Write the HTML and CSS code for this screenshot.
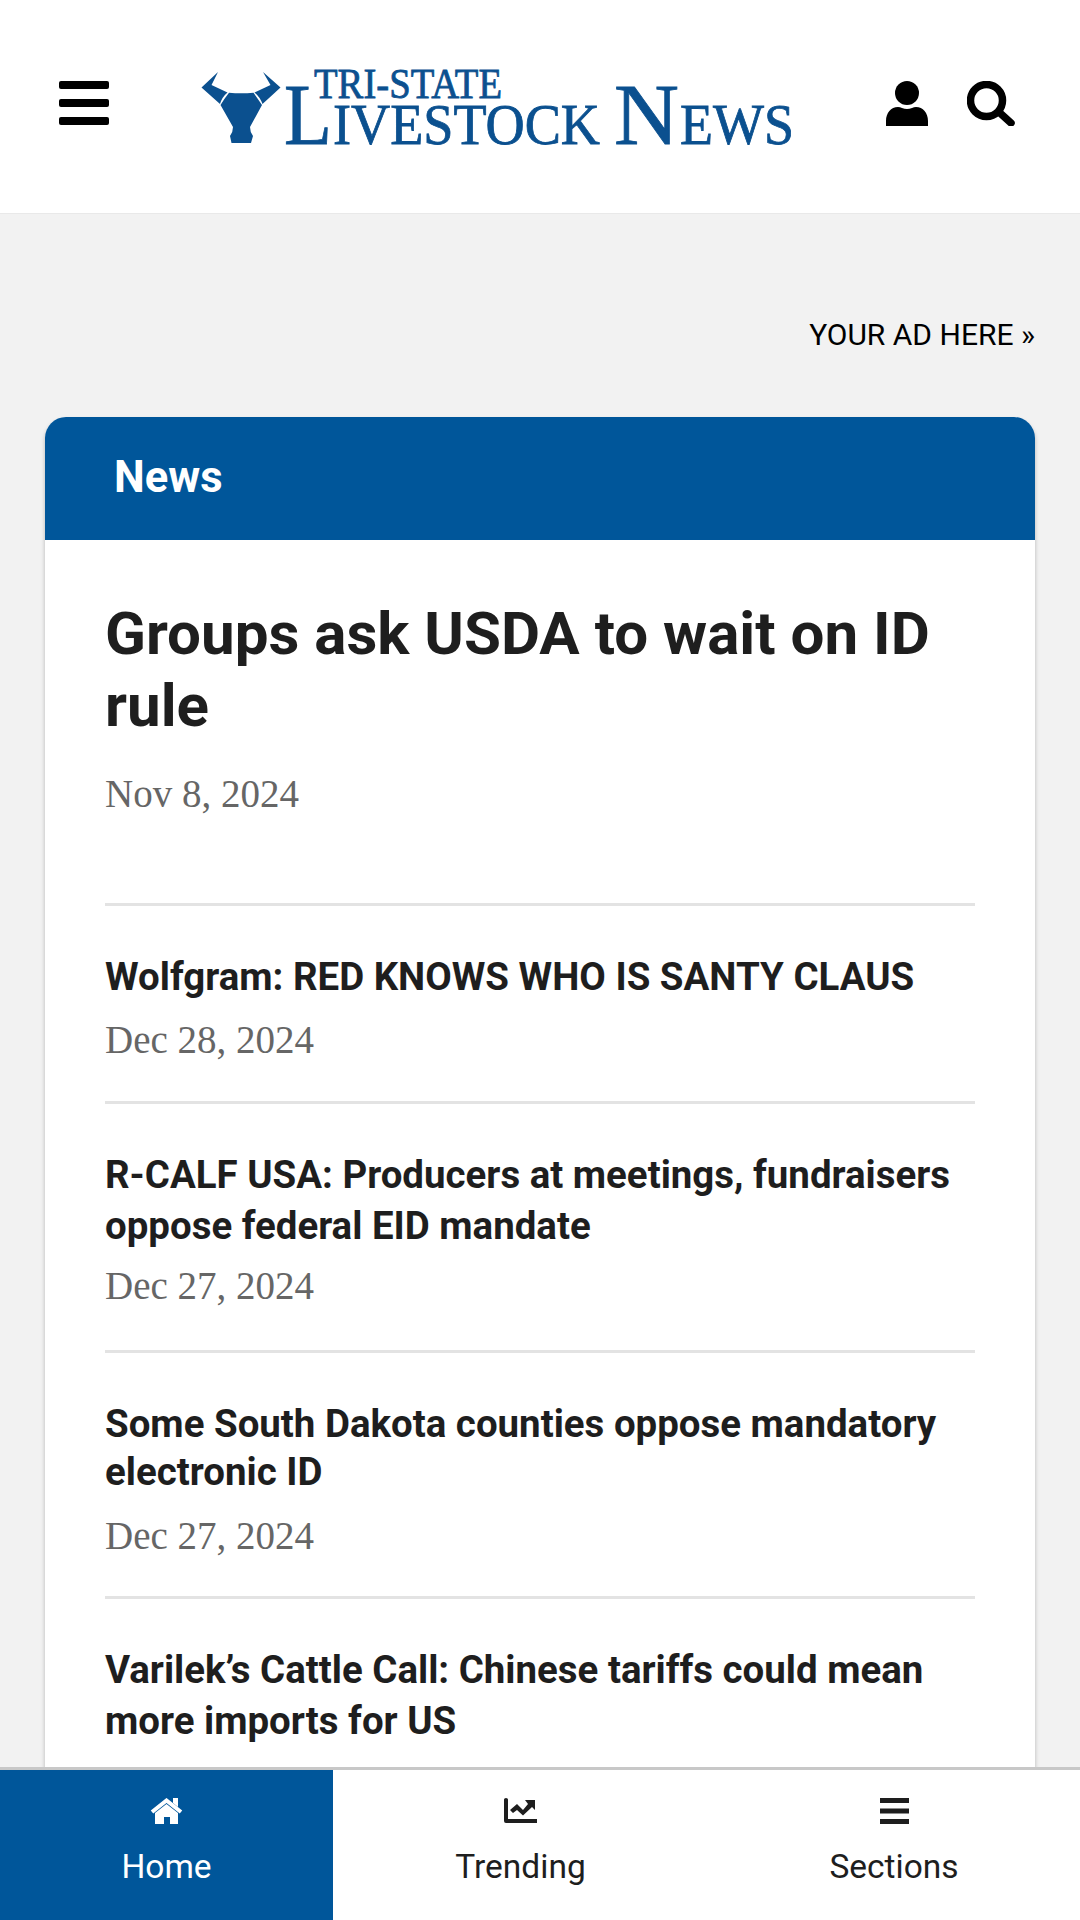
FILE: index.html
```html
<!DOCTYPE html>
<html lang="en">
<head>
    <meta charset="UTF-8">
    <meta name="viewport" content="width=device-width, initial-scale=1.0">
    <title>Tri-State Livestock News</title>
    <link rel="stylesheet" href="styles.css">
</head>
<body>
    <header class="header">
        <svg class="menu-icon" viewBox="0 0 50 44"><rect width="50" height="8" rx="2"/><rect y="18" width="50" height="8" rx="2"/><rect y="36" width="50" height="8" rx="2"/></svg>
        <svg class="logo" viewBox="0 0 594 80">
            <path d="M17 5L0.500 20.500L19 37Q21 30 26.500 25.500L10.500 18Z"/>
            <path d="M62 5L79.500 20.500L61.500 37Q59 30 53.500 25.500L69.500 18Z"/>
            <path d="M28 25.700Q40 27 52.500 25.700Q57 32 61 38L49 60Q49 65 52 69L50 76H30.500L29 69Q32 65 32 60L19.500 38Q23 32 28 25.700Z"/>
            <text x="113" y="31" font-size="42" textLength="188" lengthAdjust="spacingAndGlyphs">TRI-STATE</text>
            <text x="83" y="76.500" font-size="87" textLength="48" lengthAdjust="spacingAndGlyphs">L</text>
            <text x="132" y="76.500" font-size="57" textLength="267" lengthAdjust="spacingAndGlyphs">IVESTOCK</text>
            <text x="413" y="76.500" font-size="87" textLength="65" lengthAdjust="spacingAndGlyphs">N</text>
            <text x="479" y="76.500" font-size="57" textLength="114" lengthAdjust="spacingAndGlyphs">EWS</text>
        </svg>
        <div class="header-tools">
            <svg class="user-icon" viewBox="0 0 42 45"><circle cx="21" cy="12" r="12"/><path d="M0 45V40C0 32 5 26 12 26Q14 26 16 27Q21 29 26 27Q28 26 30 26C37 26 42 32 42 40V45Z"/></svg>
            <svg class="search-icon" viewBox="0 0 48 45"><circle cx="19.500" cy="19.500" r="16"/><path d="M33 32L44 42"/></svg>
        </div>
    </header>

    <main class="content">
        <a class="ad-link">YOUR AD HERE »</a>

        <section class="card">
            <h2 class="card-title">News</h2>
            <div class="card-body">
                <article class="lead">
                    <h1>Groups ask USDA to wait on ID rule</h1>
                    <time>Nov 8, 2024</time>
                </article>
                <article class="story">
                    <h3>Wolfgram: RED KNOWS WHO IS SANTY CLAUS</h3>
                    <time>Dec 28, 2024</time>
                </article>
                <article class="story raised-date">
                    <h3>R-CALF USA: Producers at meetings, fundraisers oppose federal EID mandate</h3>
                    <time>Dec 27, 2024</time>
                </article>
                <article class="story tight">
                    <h3>Some South Dakota counties oppose mandatory electronic ID</h3>
                    <time>Dec 27, 2024</time>
                </article>
                <article class="story">
                    <h3>Varilek’s Cattle Call: Chinese tariffs could mean more imports for US</h3>
                </article>
            </div>
        </section>
    </main>

    <nav class="bottom-nav">
        <a class="nav-item active">
            <svg viewBox="0 0 33 26"><path d="M2 14L16.500 2.500L31 14" fill="none" stroke="currentColor" stroke-width="4"/><path d="M23 0H28V9L23 5ZM5 15L16.500 6L28 15V26H20V19H14V26H5Z"/></svg>
            <span>Home</span>
        </a>
        <a class="nav-item trending">
            <svg viewBox="0 0 33 26"><path d="M0 1.500Q0 0 2 0T4 1.500V21H33V25H2Q0 25 0 23ZM21 2H31V12L28 9L19 17.500L13 12L9 15L6 12L13 6L19 12L24 6Z"/></svg>
            <span>Trending</span>
        </a>
        <a class="nav-item">
            <svg viewBox="0 0 33 26"><path d="M2 0H31V5H2ZM2 10.500H31V15.500H2ZM2 21H31V26H2Z"/></svg>
            <span>Sections</span>
        </a>
    </nav>
</body>
</html>
```

FILE: styles.css
```css
* {
    box-sizing: border-box;
}
body {
    margin: 0;
    height: 1920px;
    overflow: hidden;
    display: flex;
    flex-direction: column;
    background-color: #f2f2f2;
    color: #1e1e1e;
    font-family: Roboto, sans-serif;
}
h1, h2, h3 {
    margin: 0;
}
svg {
    display: block;
    fill: currentColor;
}
.header {
    flex: none;
    display: flex;
    align-items: flex-start;
    height: 214px;
    padding: 81px 65px 0 59px;
    background: white;
    border-bottom: 1px solid #e9e9e9;
    color: black;
}
.menu-icon {
    width: 50px;
    height: 44px;
}
.logo {
    width: 594px;
    height: 80px;
    margin: -14px 0 0 92px;
    overflow: visible;
    color: #0b508f;
    font-family: "Liberation Serif", serif;
}
.logo text {
    stroke: currentColor;
    stroke-width: 0.8;
}
.header-tools {
    display: flex;
    gap: 39px;
    margin-left: auto;
}
.user-icon {
    width: 42px;
    height: 45px;
}
.search-icon {
    width: 48px;
    height: 45px;
    fill: none;
    stroke: black;
    stroke-width: 7.5;
    stroke-linecap: round;
}
.content {
    flex: 1;
    min-height: 0;
    overflow: hidden;
    padding: 0 45px;
}
.ad-link {
    display: block;
    margin-top: 98px;
    height: 105px;
    font-size: 30px;
    line-height: 45px;
    text-align: right;
    color: black;
}
.card {
    background: white;
    border-radius: 21px 21px 0 0;
    box-shadow: 0 3px 4px rgba(0, 0, 0, 0.25);
}
.card-title {
    height: 123px;
    padding: 31px 69px;
    border-radius: 21px 21px 0 0;
    background-color: #00569a;
    color: white;
    font-size: 43.5px;
    line-height: 60px;
}
.card-body {
    padding: 57px 60px 0;
}
.lead {
    height: 306px;
}
.lead h1 {
    padding-top: 1px;
    font-size: 60.1px;
    line-height: 72px;
}
time {
    display: block;
    color: #666;
    font-family: "Liberation Serif", serif;
    font-size: 39px;
    line-height: 48px;
}
.lead time {
    margin-top: 28px;
}
.story {
    padding: 45px 0 37px;
    border-top: 3px solid #e3e3e3;
}
.story h3 {
    margin-right: -10px;
    font-size: 38.45px;
    line-height: 51px;
}
.story time {
    margin-top: 14px;
}
.raised-date {
    padding-bottom: 40px;
}
.raised-date time {
    margin-top: 11px;
}
.tight {
    padding: 47px 0 36px;
}
.tight h3 {
    line-height: 48px;
}
.tight time {
    margin-top: 16px;
}
.bottom-nav {
    flex: none;
    display: flex;
    height: 153px;
    background: white;
    border-top: 3px solid #c8c8c8;
}
.nav-item {
    display: flex;
    flex-direction: column;
    align-items: center;
    width: 372px;
    padding-top: 28px;
    font-size: 33.5px;
    line-height: 40px;
}
.nav-item.active {
    width: 333px;
    background-color: #00569a;
    color: white;
}
.nav-item.trending {
    width: 375px;
}
.nav-item svg {
    width: 33px;
    height: 26px;
    margin-bottom: 23px;
}
```
